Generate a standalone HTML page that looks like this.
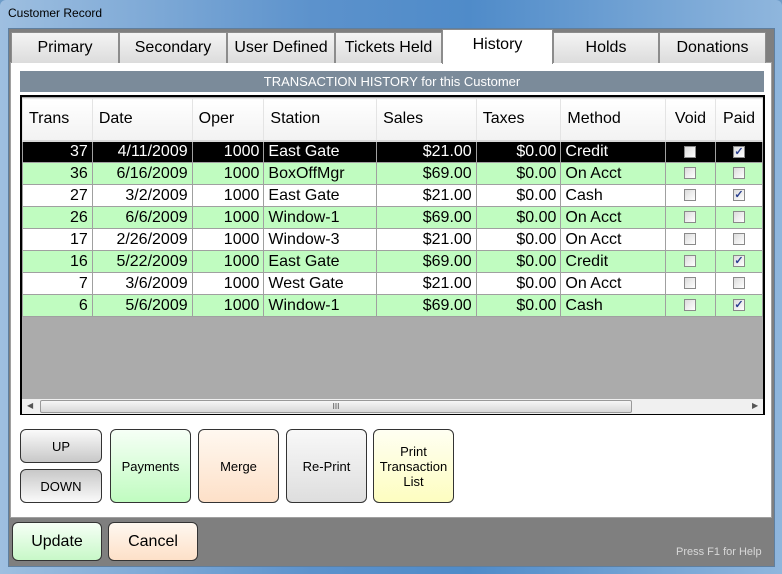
<!DOCTYPE html>
<html><head><style>
*{margin:0;padding:0;box-sizing:border-box}
body{width:782px;height:574px;overflow:hidden;font-family:"Liberation Sans",sans-serif;background:#6d9cc8;position:relative}
.a{position:absolute}
.frame{left:0;top:0;width:782px;height:574px;background:linear-gradient(90deg,#9ebfe0,#5c92cc 40%,#4f8bc9 60%,#8fb6dd);border-radius:6px 6px 0 0}
.client{left:8px;top:28px;width:767px;height:539px;background:#7f7f7f;border:1px solid #5f7f9f}
.panel{left:10px;top:62px;width:762px;height:456px;background:#fff;border:1px solid #a0a0a0}
.tab{top:32px;height:31px;background:linear-gradient(#f4f4f4,#dcdcdc);border:1px solid #8c8c8c;border-bottom:none;font-size:16px;text-align:center;line-height:29px;color:#000}
.tab.sel{top:29px;height:35px;background:#fff;line-height:29px}
.band{left:20px;top:71px;width:744px;height:21px;background:#7b8b9a;color:#fff;font-size:13px;text-align:center;line-height:21px}
.grid{left:20px;top:95px;width:745px;height:320px;background:#ababab;border:2px solid #000}
table{border-collapse:collapse;position:absolute;left:0;top:1px;font-size:16px}
td{border:1px solid #a0a0a0;height:22px;padding:0 4px;white-space:nowrap;line-height:20px}
th{font-weight:normal;text-align:left;height:42px;background:linear-gradient(#fff,#f2f2f2);border:1px solid #e4e4e4;border-bottom:2px solid #d8d8d8;padding:0 6px;font-size:16px}
.r{text-align:right}
tr.g td{background:#c0fcc0}
tr.w td{background:#fff}
tr.k td{background:#000;color:#fff}
.cb{display:inline-block;width:12px;height:12px;border:1px solid #8a8a8a;background:linear-gradient(135deg,#dcdcdc,#fff);vertical-align:middle;position:relative;font-size:11px;line-height:10px;color:#2a3f8f;text-align:center;font-weight:bold}
td.c{text-align:center}
.sb{left:0;top:302px;width:741px;height:15px;background:#f0f0f0}
.btn{border:1px solid #333;border-radius:6px;font-size:13px;text-align:center;display:flex;align-items:center;justify-content:center;color:#000;line-height:15px}
</style></head><body>
<div class="a frame"></div>
<div class="a" style="left:8px;top:6px;font-size:12px;color:#000">Customer Record</div>
<div class="a client"></div>
<div class="a panel"></div>
<div class="a tab" style="left:11px;width:108px">Primary</div>
<div class="a tab" style="left:119px;width:108px">Secondary</div>
<div class="a tab" style="left:227px;width:108px">User Defined</div>
<div class="a tab" style="left:335px;width:107px">Tickets Held</div>
<div class="a tab sel" style="left:442px;width:111px">History</div>
<div class="a tab" style="left:553px;width:106px">Holds</div>
<div class="a tab" style="left:659px;width:107px">Donations</div>
<div class="a band">TRANSACTION HISTORY for this Customer</div>
<div class="a grid">
<table>
<tr><th style="width:70px">Trans</th><th style="width:100px">Date</th><th style="width:72px">Oper</th><th style="width:113px">Station</th><th style="width:100px">Sales</th><th style="width:85px">Taxes</th><th style="width:105px">Method</th><th style="width:50px;text-align:center">Void</th><th style="width:47px;text-align:center">Paid</th></tr>
<tr class="k"><td class="r">37</td><td class="r">4/11/2009</td><td class="r">1000</td><td>East Gate</td><td class="r">$21.00</td><td class="r">$0.00</td><td>Credit</td><td class="c"><span class="cb"></span></td><td class="c"><span class="cb">✓</span></td></tr>
<tr class="g"><td class="r">36</td><td class="r">6/16/2009</td><td class="r">1000</td><td>BoxOffMgr</td><td class="r">$69.00</td><td class="r">$0.00</td><td>On Acct</td><td class="c"><span class="cb"></span></td><td class="c"><span class="cb"></span></td></tr>
<tr class="w"><td class="r">27</td><td class="r">3/2/2009</td><td class="r">1000</td><td>East Gate</td><td class="r">$21.00</td><td class="r">$0.00</td><td>Cash</td><td class="c"><span class="cb"></span></td><td class="c"><span class="cb">✓</span></td></tr>
<tr class="g"><td class="r">26</td><td class="r">6/6/2009</td><td class="r">1000</td><td>Window-1</td><td class="r">$69.00</td><td class="r">$0.00</td><td>On Acct</td><td class="c"><span class="cb"></span></td><td class="c"><span class="cb"></span></td></tr>
<tr class="w"><td class="r">17</td><td class="r">2/26/2009</td><td class="r">1000</td><td>Window-3</td><td class="r">$21.00</td><td class="r">$0.00</td><td>On Acct</td><td class="c"><span class="cb"></span></td><td class="c"><span class="cb"></span></td></tr>
<tr class="g"><td class="r">16</td><td class="r">5/22/2009</td><td class="r">1000</td><td>East Gate</td><td class="r">$69.00</td><td class="r">$0.00</td><td>Credit</td><td class="c"><span class="cb"></span></td><td class="c"><span class="cb">✓</span></td></tr>
<tr class="w"><td class="r">7</td><td class="r">3/6/2009</td><td class="r">1000</td><td>West Gate</td><td class="r">$21.00</td><td class="r">$0.00</td><td>On Acct</td><td class="c"><span class="cb"></span></td><td class="c"><span class="cb"></span></td></tr>
<tr class="g"><td class="r">6</td><td class="r">5/6/2009</td><td class="r">1000</td><td>Window-1</td><td class="r">$69.00</td><td class="r">$0.00</td><td>Cash</td><td class="c"><span class="cb"></span></td><td class="c"><span class="cb">✓</span></td></tr>
</table>
<div class="a sb">
<div class="a" style="left:5px;top:2px;font-size:8px;color:#555">◀</div>
<div class="a" style="left:18px;top:1px;width:592px;height:13px;border:1px solid #999;border-radius:2px;background:linear-gradient(#f6f6f6,#d8d8d8);font-size:8px;text-align:center;line-height:11px;color:#444">III</div>
<div class="a" style="left:730px;top:2px;font-size:8px;color:#555">▶</div>
</div>
</div>
<div class="a btn" style="left:20px;top:429px;width:82px;height:34px;background:linear-gradient(#fafafa,#c8c8c8)">UP</div>
<div class="a btn" style="left:20px;top:469px;width:82px;height:34px;background:linear-gradient(#c8c8c8,#fafafa)">DOWN</div>
<div class="a btn" style="left:110px;top:429px;width:81px;height:74px;background:linear-gradient(#f6fff6,#c0fcc0)">Payments</div>
<div class="a btn" style="left:198px;top:429px;width:81px;height:74px;background:linear-gradient(#fff8f0,#fde0c8)">Merge</div>
<div class="a btn" style="left:286px;top:429px;width:81px;height:74px;background:linear-gradient(#f8f8f8,#dedede)">Re-Print</div>
<div class="a btn" style="left:373px;top:429px;width:81px;height:74px;background:linear-gradient(#fffff2,#fdfdc0)">Print<br>Transaction<br>List</div>
<div class="a btn" style="left:12px;top:522px;width:90px;height:39px;font-size:16px;background:linear-gradient(#f6fff6,#c8f8c8)">Update</div>
<div class="a btn" style="left:108px;top:522px;width:90px;height:39px;font-size:16px;background:linear-gradient(#fff8f0,#fde0c8)">Cancel</div>
<div class="a" style="left:676px;top:546px;font-size:11px;color:#d8d8d8">Press F1 for Help</div>
</body></html>
